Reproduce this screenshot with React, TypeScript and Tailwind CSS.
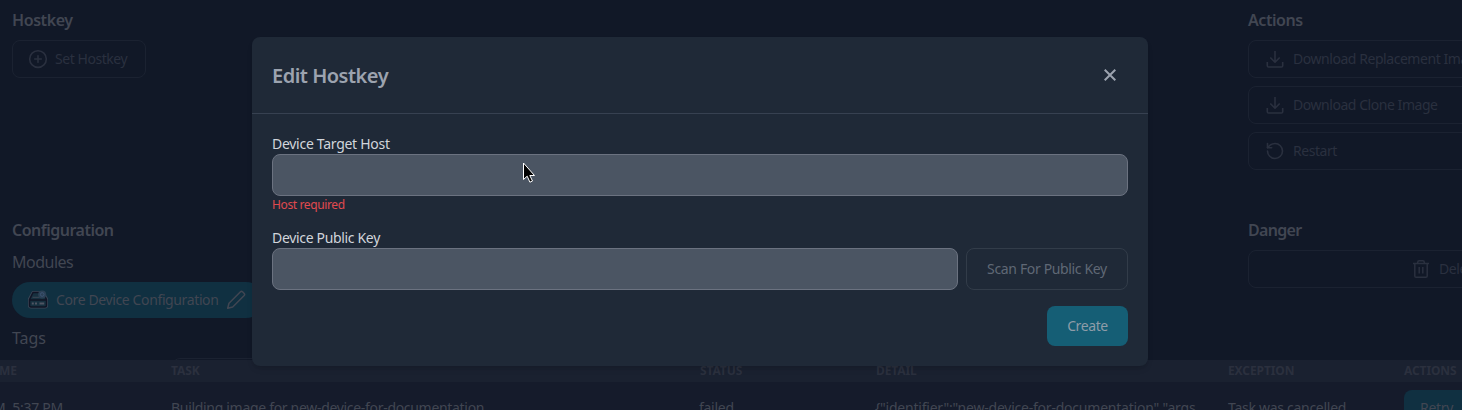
import React from 'react';
import { CirclePlus, RotateCcw } from 'lucide-react';

function DownloadIcon() {
  return (
    <svg className="h-5 w-5 shrink-0" viewBox="0 0 20 20" fill="none" stroke="currentColor" strokeWidth="1.6" strokeLinejoin="round">
      <path d="M10 2v11M5.300 8.500 10 13.200l4.700-4.700M2.300 13v3.700q0 1.300 1.300 1.300h12.800q1.300 0 1.300-1.300V13" />
    </svg>
  );
}

function TrashIcon() {
  return (
    <svg className="h-5 w-5 shrink-0" viewBox="0 0 20 20" fill="none" stroke="currentColor" strokeWidth="1.5">
      <path d="M2 4.500h16M6.700 4.500V3.200q0-1.500 1.500-1.500h3.600q1.500 0 1.500 1.500v1.300M3.800 4.500v12.400q0 1.300 1.300 1.300h9.800q1.300 0 1.300-1.300V4.500M8.200 8v6.500M11.800 8v6.500" />
    </svg>
  );
}

function DeviceIcon() {
  return (
    <svg className="h-5 w-5 shrink-0" viewBox="0 0 20 20" fill="none" strokeLinejoin="round">
      <path d="M5 2.500h10L18.500 9v6.500q0 1.500-1.500 1.500H3q-1.500 0-1.500-1.500V9z" stroke="#3a4656" strokeWidth="3" />
      <path d="M5 2.500h10L18.500 9.500v6q0 1.500-1.500 1.500H3q-1.500 0-1.500-1.500v-6zM1.500 10h17" fill="#17303f" stroke="#111425" strokeWidth="1.500" />
      <path d="M3.800 13.500h2M7 13.500h2M11.500 13.500h4.700" stroke="#505563" strokeWidth="2" />
      <path d="M4.500 7.300h7" stroke="#3e4654" />
      <circle cx="14.200" cy="4.500" r="4" fill="#2b4054" />
      <circle cx="14.200" cy="4.500" r="1.800" stroke="#3d5474" />
    </svg>
  );
}

function PencilIcon() {
  return (
    <svg className="h-5 w-5 shrink-0" viewBox="0 0 20 20" fill="none" stroke="currentColor" strokeWidth="1.500" strokeLinejoin="round">
      <path d="M1.700 18.300 3 13.300 14.500 1.800q1-.9 2 0l1.700 1.700q.9 1 0 2L6.700 17z" />
    </svg>
  );
}

function ActionButton({ icon, label, className = 'gap-2 px-4' }: { icon: React.ReactNode; label: string; className?: string }) {
  return (
    <div className={`flex h-[38px] items-center rounded-lg border border-[#1b2231] text-sm tracking-[-0.45px] whitespace-nowrap text-[#2a303f] ${className}`}>
      {icon}
      <span>{label}</span>
    </div>
  );
}

function Page() {
  return (
    <div className="flex h-[410px] flex-col overflow-hidden bg-[#111827] text-[#414652]">
      <div className="flex h-[360px] shrink-0 overflow-hidden">
        <section className="w-[1248px] shrink-0 pt-2 pl-3">
          <h2 className="text-base leading-6 font-semibold tracking-[-0.42px]">Hostkey</h2>
          <ActionButton icon={<CirclePlus className="h-5 w-5 shrink-0" strokeWidth={1.9} />} label="Set Hostkey" className="mt-2 w-[134px] gap-[7px] pl-[15px] tracking-[-0.3px]" />
          <h2 className="mt-[140px] text-base leading-6 font-semibold tracking-[-0.5px]">Configuration</h2>
          <h3 className="mt-2 text-base leading-6 tracking-[-0.5px]">Modules</h3>
          <div className="mt-2 flex h-9 w-[252px] items-center gap-2 rounded-full bg-[#103041] px-4 text-sm">
            <DeviceIcon />
            <span className="tracking-[-0.38px] whitespace-nowrap">Core Device Configuration</span>
            <PencilIcon />
          </div>
          <h3 className="mt-2 text-base leading-6 tracking-[-0.1px]">Tags</h3>
          <div className="mt-2 ml-[160px] h-9 w-[300px] rounded-lg border border-[#1b2231]" />
        </section>
        <aside className="w-[360px] shrink-0 pt-2">
          <h2 className="text-base leading-6 font-semibold tracking-[-0.45px]">Actions</h2>
          <div className="mt-2 flex flex-col gap-2">
            <ActionButton icon={<DownloadIcon />} label="Download Replacement Image" />
            <ActionButton icon={<DownloadIcon />} label="Download Clone Image" />
            <ActionButton icon={<RotateCcw className="h-5 w-5 shrink-0" strokeWidth={1.9} />} label="Restart" />
          </div>
          <h2 className="mt-12 text-base leading-6 font-semibold tracking-[-0.7px]">Danger</h2>
          <ActionButton icon={<TrashIcon />} label="Delete" className="mt-2 gap-2 pl-[162px]" />
        </aside>
      </div>
      <div className="w-[1600px] shrink-0 bg-[#151b2b] whitespace-nowrap">
        <div className="flex h-[22px] items-center bg-[#1a2130] text-xs font-bold tracking-[-0.1px] text-[#2b303e]">
          <span className="-ml-px w-[172px] shrink-0">ME</span>
          <span className="w-[529px] shrink-0">TASK</span>
          <span className="w-[176px] shrink-0">STATUS</span>
          <span className="w-[352px] shrink-0">DETAIL</span>
          <span className="w-[176px] shrink-0">EXCEPTION</span>
          <span>ACTIONS</span>
        </div>
        <div className="flex h-[72px] pt-2 text-sm tracking-[-0.28px]">
          <span className="-ml-[7px] w-[178px] shrink-0 pt-2">M, 5:37 PM</span>
          <span className="w-[528px] shrink-0 pt-2 tracking-[-0.31px]">Building image for new-device-for-documentation</span>
          <span className="w-[176px] shrink-0 pt-2">failed</span>
          <span className="w-[353px] shrink-0 pt-2 tracking-[-0.22px]">{'{"identifier":"new-device-for-documentation","args'}</span>
          <span className="w-[176px] shrink-0 pt-2">Task was cancelled</span>
          <span className="h-9 w-[80px] shrink-0 rounded-lg bg-[#103041] px-4 pt-2">Retry</span>
        </div>
      </div>
    </div>
  );
}

function Modal() {
  return (
    <div className="absolute top-[37px] left-[252px] h-[329px] w-[896px] rounded-lg bg-[#1f2937] shadow-md">
      <div className="flex h-[77px] items-center justify-between border-b border-[#374151] px-5">
        <h1 className="pt-0.5 text-xl font-semibold tracking-[-0.5px] text-[#9ca3af]">Edit Hostkey</h1>
        <svg className="mr-3 h-3 w-3 text-[#9ca3af]" viewBox="0 0 12 12" fill="none" stroke="currentColor" strokeWidth="2">
          <path d="m.7.7 10.600 10.600M11.300.7.7 11.300" />
        </svg>
      </div>
      <div className="px-5 pt-5 text-sm tracking-[-0.28px]">
        <label className="block h-5 text-[#d1d5db]" htmlFor="host">Device Target Host</label>
        <input id="host" className="block h-[42px] w-full rounded-lg border border-[#6b7280] bg-[#4b5563]" />
        <p className="mt-px text-xs leading-4 tracking-[-0.38px] text-[#e04a4f]">Host required</p>
        <label className="mt-[15px] block h-5 tracking-[-0.33px] text-[#d1d5db]" htmlFor="key">Device Public Key</label>
        <div className="flex gap-2">
          <input id="key" className="h-[42px] w-[686px] rounded-lg border border-[#6b7280] bg-[#4b5563]" />
          <button className="h-[42px] flex-1 rounded-lg border border-[#323c49] tracking-[-0.35px] text-[#5f6875]">Scan For Public Key</button>
        </div>
        <div className="mt-4 flex justify-end">
          <button className="h-10 w-[81px] rounded-lg bg-[#155e75] tracking-[-0.4px] text-[#8e9ca8]">Create</button>
        </div>
      </div>
    </div>
  );
}

export default function App() {
  return (
    <div className="relative h-[410px] w-full overflow-hidden font-['Noto_Sans',sans-serif]">
      <Page />
      <Modal />
      <svg className="absolute top-[162px] left-[522px] h-[22px] w-[14px]" viewBox="0 0 14 22">
        <path d="M1.500 1v16.500l3.700-3.300 2.700 6 2.600-1.200-2.700-5.500h4.700z" fill="#000" stroke="#fff" />
      </svg>
    </div>
  );
}
